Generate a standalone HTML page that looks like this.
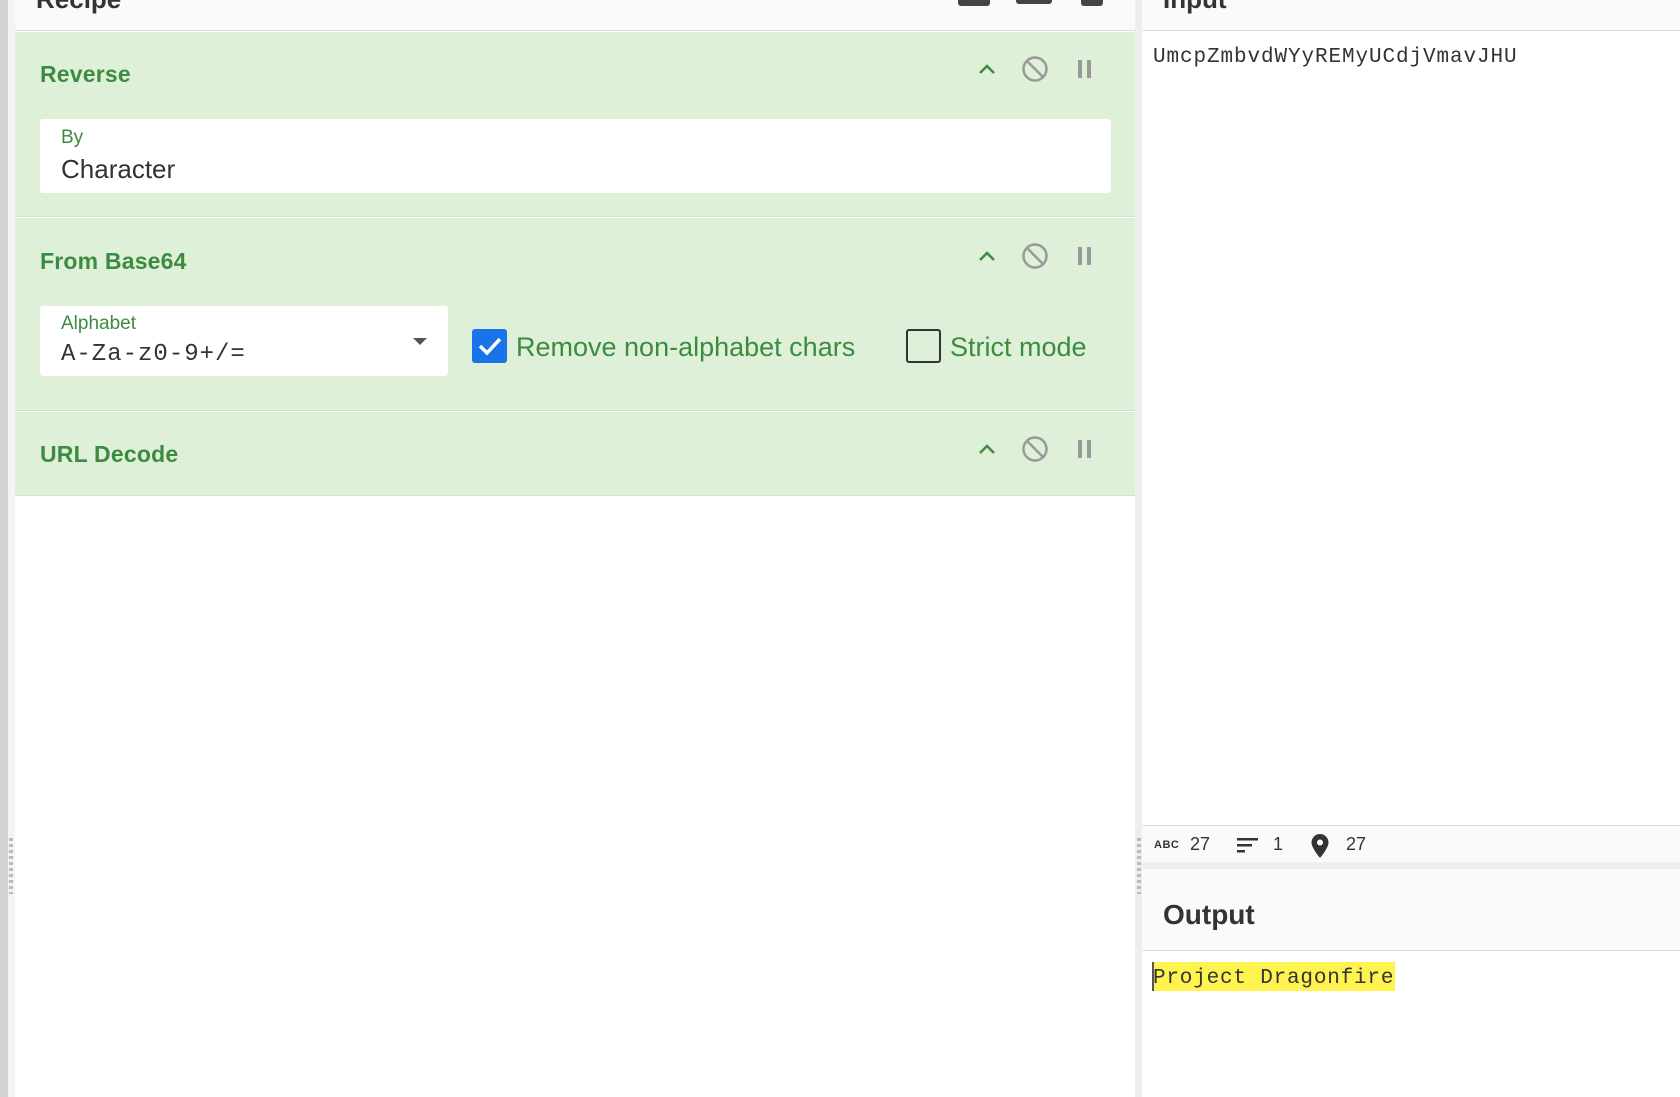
<!DOCTYPE html>
<html><head><style>
*{margin:0;padding:0;box-sizing:border-box}
body{width:1680px;height:1097px;overflow:hidden;background:#fff;font-family:"Liberation Sans",sans-serif;position:relative}
.a{position:absolute}
.mono{font-family:"Liberation Mono","DejaVu Sans Mono",monospace}
.title{color:#3d8b40;font-weight:bold;font-size:23px;letter-spacing:0.2px}
.op{background:#dff0d8;left:15px;width:1120px}
</style></head><body>
<div class="a" style="left:0;top:0;width:8px;height:1097px;background:#d4d4d4"></div>
<div class="a" style="left:8px;top:0;width:7px;height:1097px;background:#f3f3f3"></div>
<div class="a" style="left:15px;top:0;width:1120px;height:31px;background:#fafafa;border-bottom:1px solid #ddd"></div>
<div class="a" style="left:36px;top:-16px;font-size:26px;font-weight:bold;color:#333">Recipe</div>
<div class="a" style="left:958px;top:-8px;width:32px;height:14px;background:#444;border-radius:3px"></div>
<div class="a" style="left:1016px;top:-8px;width:36px;height:12px;background:#444;border-radius:3px"></div>
<div class="a" style="left:1081px;top:-8px;width:22px;height:14px;background:#444;border-radius:3px"></div>
<div class="a" style="left:1135px;top:0;width:7px;height:1097px;background:#eee"></div>

<div class="a op" style="top:32px;height:185px;border-bottom:1px solid #cfe3c8"></div>
<div class="a title" style="left:40px;top:61px">Reverse</div>
<div class="a" style="left:40px;top:119px;width:1071px;height:74px;background:#fff;border-radius:3px"></div>
<div class="a" style="left:61px;top:127px;font-size:19px;color:#3d8b40">By</div>
<div class="a" style="left:61px;top:154px;font-size:26px;color:#333">Character</div>

<div class="a op" style="top:218px;height:193px;border-bottom:1px solid #cfe3c8"></div>
<div class="a title" style="left:40px;top:248px">From Base64</div>
<div class="a" style="left:40px;top:306px;width:408px;height:70px;background:#fff;border-radius:3px"></div>
<div class="a" style="left:61px;top:313px;font-size:19px;color:#3d8b40">Alphabet</div>
<div class="a mono" style="left:61px;top:341px;font-size:24px;color:#333;letter-spacing:1px">A-Za-z0-9+/=</div>
<div class="a" style="left:413px;top:338px;width:0;height:0;border-left:7px solid transparent;border-right:7px solid transparent;border-top:7px solid #555"></div>
<div class="a" style="left:472px;top:329px;width:35px;height:34px;background:#1a73e8;border-radius:3px"></div>
<svg class="a" style="left:472px;top:329px" width="35" height="34"><path d="M8 17l7 7 13-14" stroke="#fff" stroke-width="3.5" fill="none"/></svg>
<div class="a" style="left:516px;top:332px;font-size:27px;color:#3d8b40">Remove non-alphabet chars</div>
<div class="a" style="left:906px;top:329px;width:35px;height:34px;border:2.5px solid #333;border-radius:3px"></div>
<div class="a" style="left:950px;top:332px;font-size:27px;color:#3d8b40">Strict mode</div>

<div class="a op" style="top:412px;height:84px;border-bottom:1px solid #cfe3c8"></div>
<div class="a title" style="left:40px;top:441px">URL Decode</div>

<svg class="a" style="left:970px;top:52px" width="130" height="440">
<g fill="none">
<g><path d="M10 21l7-7 7 7" stroke="#3d8b40" stroke-width="2.5"/><circle cx="65" cy="17" r="11.5" stroke="#999" stroke-width="2.5"/><path d="M57 9l16 16" stroke="#999" stroke-width="2.5"/><rect x="108" y="8" width="4" height="18" fill="#999"/><rect x="117" y="8" width="4" height="18" fill="#999"/></g>
<g transform="translate(0,187)"><path d="M10 21l7-7 7 7" stroke="#3d8b40" stroke-width="2.5"/><circle cx="65" cy="17" r="11.5" stroke="#999" stroke-width="2.5"/><path d="M57 9l16 16" stroke="#999" stroke-width="2.5"/><rect x="108" y="8" width="4" height="18" fill="#999"/><rect x="117" y="8" width="4" height="18" fill="#999"/></g>
<g transform="translate(0,380)"><path d="M10 21l7-7 7 7" stroke="#3d8b40" stroke-width="2.5"/><circle cx="65" cy="17" r="11.5" stroke="#999" stroke-width="2.5"/><path d="M57 9l16 16" stroke="#999" stroke-width="2.5"/><rect x="108" y="8" width="4" height="18" fill="#999"/><rect x="117" y="8" width="4" height="18" fill="#999"/></g>
</g></svg>

<div class="a" style="left:1142px;top:0;width:538px;height:31px;background:#fafafa;border-bottom:1px solid #ddd"></div>
<div class="a" style="left:1163px;top:-16px;font-size:26px;font-weight:bold;color:#333">Input</div>
<div class="a mono" style="left:1153px;top:46px;font-size:21px;color:#333;letter-spacing:0.9px">UmcpZmbvdWYyREMyUCdjVmavJHU</div>
<div class="a" style="left:1142px;top:825px;width:538px;height:37px;background:#fafafa;border-top:1px solid #ddd"></div>
<div class="a" style="left:1154px;top:839px;font-size:11px;font-weight:bold;color:#333;letter-spacing:0.5px">ABC</div>
<div class="a" style="left:1190px;top:834px;font-size:18px;color:#333">27</div>
<svg class="a" style="left:1237px;top:836px" width="24" height="18"><rect x="0" y="2" width="21" height="2.5" fill="#333"/><rect x="0" y="8" width="15" height="2.5" fill="#333"/><rect x="0" y="14" width="8" height="2.5" fill="#333"/></svg>
<div class="a" style="left:1273px;top:834px;font-size:18px;color:#333">1</div>
<svg class="a" style="left:1310px;top:833px" width="20" height="26"><path d="M10 1C5 1 1.5 5 1.5 9.5 1.5 15 10 25 10 25s8.5-10 8.5-15.5C18.5 5 15 1 10 1z" fill="#333"/><circle cx="10" cy="9.5" r="3" fill="#fafafa"/></svg>
<div class="a" style="left:1346px;top:834px;font-size:18px;color:#333">27</div>
<div class="a" style="left:1142px;top:862px;width:538px;height:7px;background:#eee"></div>
<div class="a" style="left:1142px;top:869px;width:538px;height:82px;background:#fafafa;border-bottom:1px solid #ddd"></div>
<div class="a" style="left:1163px;top:899px;font-size:28px;font-weight:bold;color:#333">Output</div>
<div class="a" style="left:1153px;top:962px;width:242px;height:29px;background:#fff34f"></div>
<div class="a" style="left:1152px;top:962px;width:2px;height:29px;background:#555"></div>
<div class="a mono" style="left:1153px;top:967px;font-size:21px;color:#333;letter-spacing:0.8px">Project Dragonfire</div>
<div class="a" style="left:9px;top:838px;width:4px;height:56px;background:repeating-linear-gradient(#bbb 0 3px,transparent 3px 6px)"></div>
<div class="a" style="left:1137px;top:838px;width:4px;height:56px;background:repeating-linear-gradient(#bbb 0 3px,transparent 3px 6px)"></div>
</body></html>
